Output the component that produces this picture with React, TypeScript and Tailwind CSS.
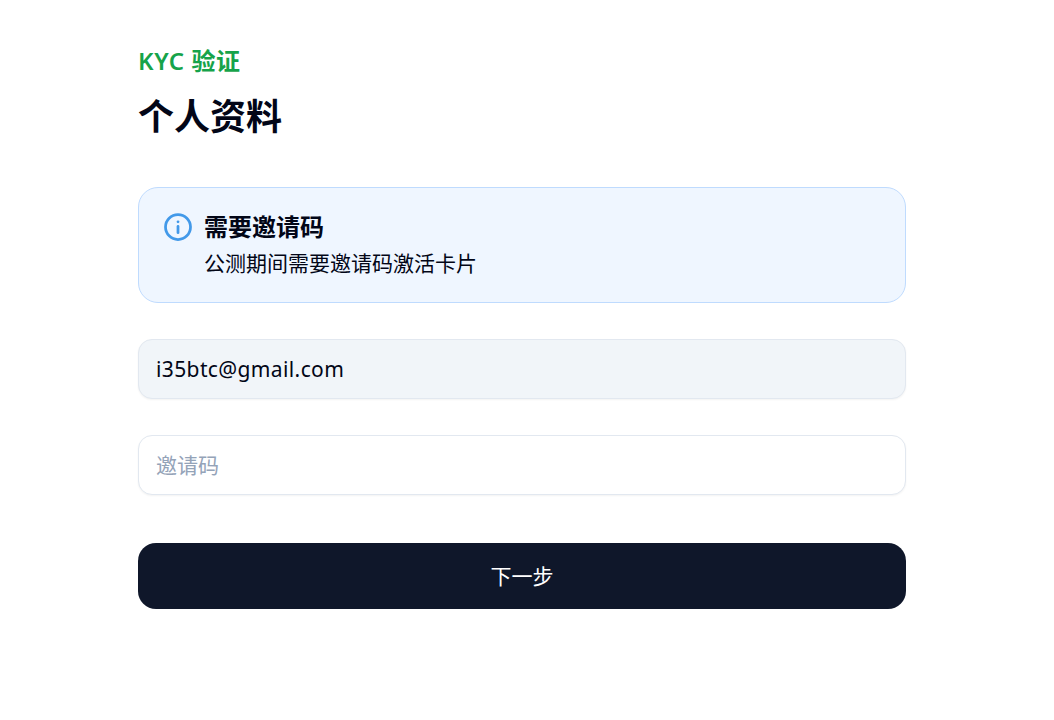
import React from 'react';

const fontStack = 'font-["Noto_Sans","Noto_Sans_CJK_SC",sans-serif]';

const InfoIcon = () => (
  <svg width="30" height="30" viewBox="0 0 24 24" fill="none" stroke="#4299e9" strokeWidth="2.2" strokeLinecap="round" className="mt-px shrink-0">
    <circle cx="12" cy="12" r="10" />
    <path d="M12 16.5v-5" />
    <path d="M12 7.8h.01" />
  </svg>
);

const App = () => {
  return (
    <div className={`min-h-screen bg-white pr-[10px] ${fontStack}`}>
      <div className="mx-auto w-[768px] pt-[44px]">
        <p className="text-[24px] leading-[34px] font-semibold tracking-[0.6px] text-[#16a34a]">KYC 验证</p>
        <h1 className="mt-[14px] text-[36px] leading-[50px] font-bold text-[#020617]">个人资料</h1>

        <div className="mt-[45px] flex h-[116px] gap-[11px] rounded-[20px] border border-[#bfdbfe] bg-[#eff6ff] px-[24px] pt-[23px]">
          <InfoIcon />
          <div>
            <p className="text-[24px] leading-[32px] font-bold text-[#020617]">需要邀请码</p>
            <p className="mt-[5px] text-[21px] leading-[30px] text-[#020617]">公测期间需要邀请码激活卡片</p>
          </div>
        </div>

        <input
          readOnly
          value="i35btc@gmail.com"
          className="mt-[36px] block h-[60px] w-full rounded-[14px] border border-[#e2e8f0] bg-[#f1f5f9] px-[17px] text-[21px] tracking-[0.38px] text-[#020617] shadow-xs outline-none"
        />
        <input
          placeholder="邀请码"
          className="mt-[36px] block h-[60px] w-full rounded-[14px] border border-[#e2e8f0] bg-white px-[17px] text-[21px] text-[#020617] shadow-xs outline-none placeholder:text-[#94a3b8]"
        />

        <button className="mt-[48px] block h-[66px] w-full rounded-[18px] bg-[#0f172a] pt-[2px] text-[21px] text-white">
          下一步
        </button>
      </div>
    </div>
  );
};

export default App;
